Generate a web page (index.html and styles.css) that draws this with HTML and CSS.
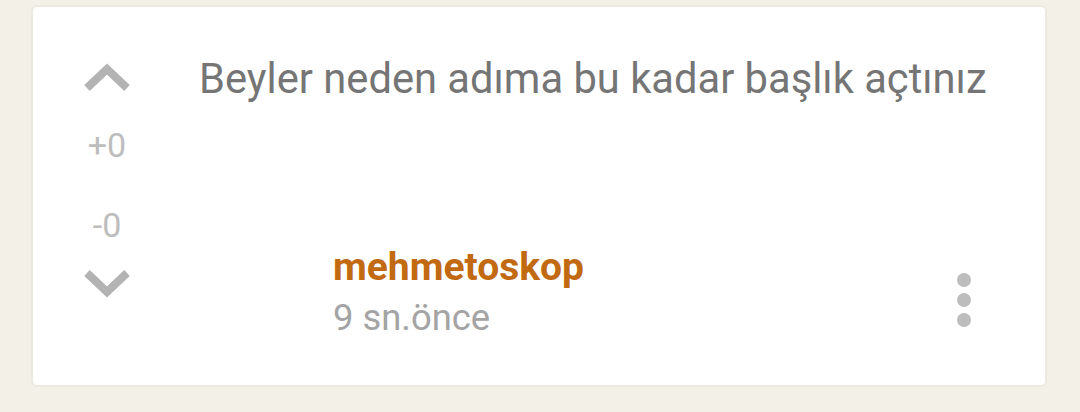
FILE: index.html
```html
<!DOCTYPE html>
<html>
<head>
<meta charset="utf-8">
<link rel="stylesheet" href="styles.css">
</head>
<body>
<div class="card">
  <div class="votes">
    <svg class="chev up" width="48" height="32" viewBox="0 0 48 32"><polyline points="4,27 24,8 44,27" fill="none" stroke="#b3b3b3" stroke-width="8"/></svg>
    <div class="count plus">+0</div>
    <div class="count minus">-0</div>
    <svg class="chev down" width="48" height="32" viewBox="0 0 48 32"><polyline points="4,5 24,24 44,5" fill="none" stroke="#b3b3b3" stroke-width="8"/></svg>
  </div>
  <div class="content">
    <div class="title">Beyler neden adıma bu kadar başlık açtınız</div>
    <div class="footer">
      <div class="author">
        <div class="name">mehmetoskop</div>
        <div class="time">9 sn.önce</div>
      </div>
      <div class="more"><span></span><span></span><span></span></div>
    </div>
  </div>
</div>
</body>
</html>
```

FILE: styles.css
```css
html, body {
  margin: 0;
  padding: 0;
  background: #f3f1e7;
  font-family: Roboto, "Liberation Sans", sans-serif;
}
.card {
  margin: 5px 0 0 31px;
  width: 1016px;
  height: 382px;
  box-sizing: border-box;
  background: #fff;
  border: 2px solid #ebe8de;
  border-radius: 6px;
  display: flex;
}
.votes {
  width: 148px;
  display: flex;
  flex-direction: column;
  align-items: center;
  padding-top: 54px;
  box-sizing: border-box;
}
.chev { display: block; }
.count {
  font-size: 34px;
  line-height: 40px;
  color: #bdbdbd;
}
.plus { margin-top: 32px; }
.minus { margin-top: 40px; }
.down { margin-top: 23px; }
.content {
  flex: 1;
  display: flex;
  flex-direction: column;
  padding-left: 18px;
  padding-top: 48px;
}
.title {
  font-size: 41.7px;
  line-height: 48px;
  color: #757575;
}
.footer {
  display: flex;
  align-items: flex-start;
  margin-top: 142px;
  padding-left: 134px;
}
.author { flex: 1; }
.name {
  font-size: 39px;
  font-weight: bold;
  color: #c26a12;
  line-height: 44px;
}
.time {
  margin-top: 5px;
  font-size: 36.4px;
  color: #a4a4a4;
  line-height: 48px;
}
.more {
  display: flex;
  flex-direction: column;
  gap: 6px;
  margin-top: 28px;
  margin-right: 74px;
}
.more span {
  width: 14px;
  height: 14px;
  border-radius: 50%;
  background: #bdbdbd;
}
```
